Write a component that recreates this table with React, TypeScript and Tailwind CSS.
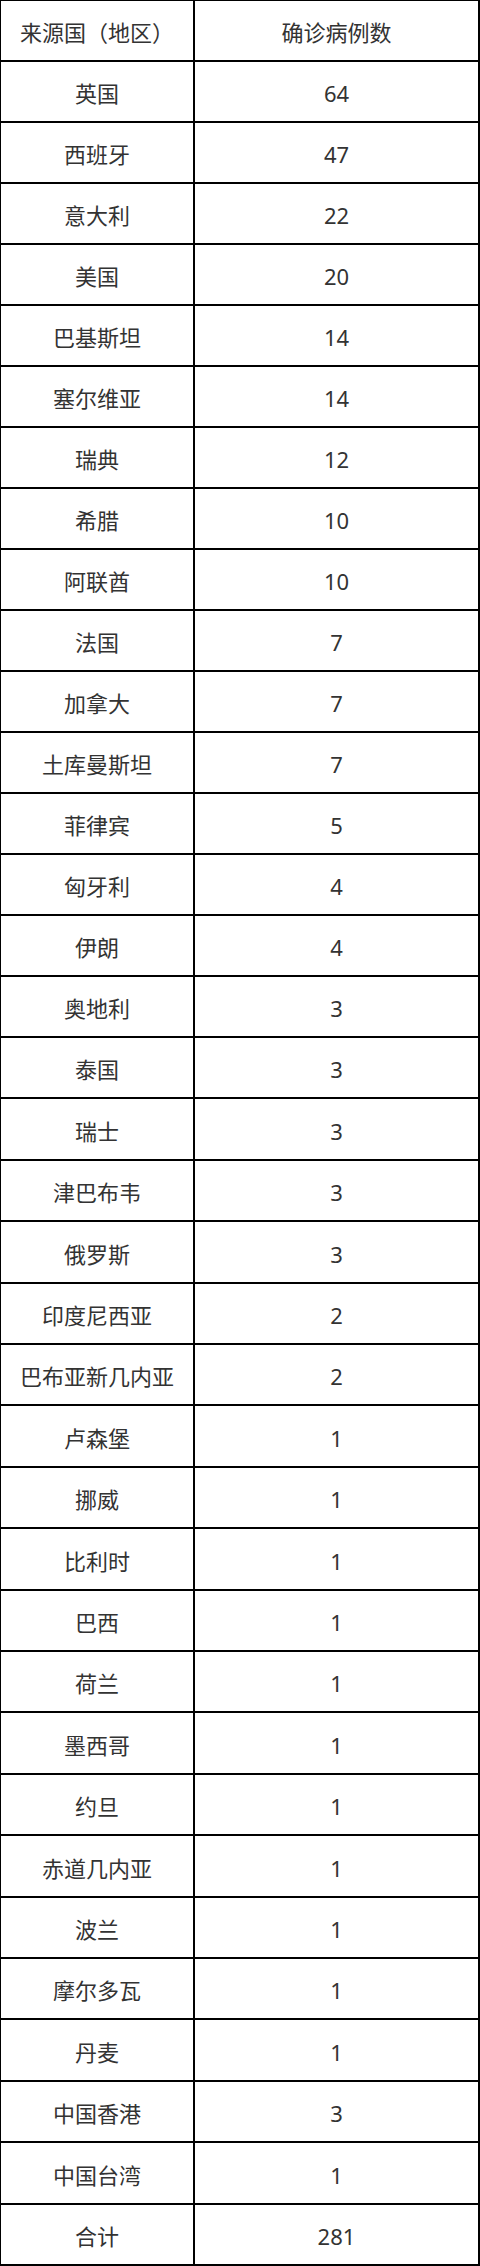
const rows: [string, number][] = [
  ['英国', 64],
  ['西班牙', 47],
  ['意大利', 22],
  ['美国', 20],
  ['巴基斯坦', 14],
  ['塞尔维亚', 14],
  ['瑞典', 12],
  ['希腊', 10],
  ['阿联酋', 10],
  ['法国', 7],
  ['加拿大', 7],
  ['土库曼斯坦', 7],
  ['菲律宾', 5],
  ['匈牙利', 4],
  ['伊朗', 4],
  ['奥地利', 3],
  ['泰国', 3],
  ['瑞士', 3],
  ['津巴布韦', 3],
  ['俄罗斯', 3],
  ['印度尼西亚', 2],
  ['巴布亚新几内亚', 2],
  ['卢森堡', 1],
  ['挪威', 1],
  ['比利时', 1],
  ['巴西', 1],
  ['荷兰', 1],
  ['墨西哥', 1],
  ['约旦', 1],
  ['赤道几内亚', 1],
  ['波兰', 1],
  ['摩尔多瓦', 1],
  ['丹麦', 1],
  ['中国香港', 3],
  ['中国台湾', 1],
];

// rows below the middle of the table are a pixel taller in the screenshot
const tall = new Set([18, 20, 23, 25, 28, 30, 33, 35]);

function Row({ left, right, index }: { left: string; right: string | number; index: number }) {
  return (
    <div className={`flex border-b-2 border-black ${tall.has(index) ? 'h-[62px]' : 'h-[61px]'}`}>
      <div className="w-[192px] flex items-center justify-center pt-[3px]">{left}</div>
      <div className="w-[2px] bg-black" />
      <div className="flex-1 flex items-center justify-center pt-[3px]">{right}</div>
    </div>
  );
}

export default function App() {
  const all: [string, string | number][] = [['来源国（地区）', '确诊病例数'], ...rows, ['合计', 281]];

  return (
    <div
      className="w-[480px] bg-white text-[#333] text-[22px] leading-none border-t border-l border-r-2 border-black"
      style={{ fontFamily: '"Noto Sans", "Noto Sans CJK SC", sans-serif' }}
    >
      {all.map(([l, r], i) => (
        <Row key={l} left={l} right={r} index={i} />
      ))}
    </div>
  );
}
